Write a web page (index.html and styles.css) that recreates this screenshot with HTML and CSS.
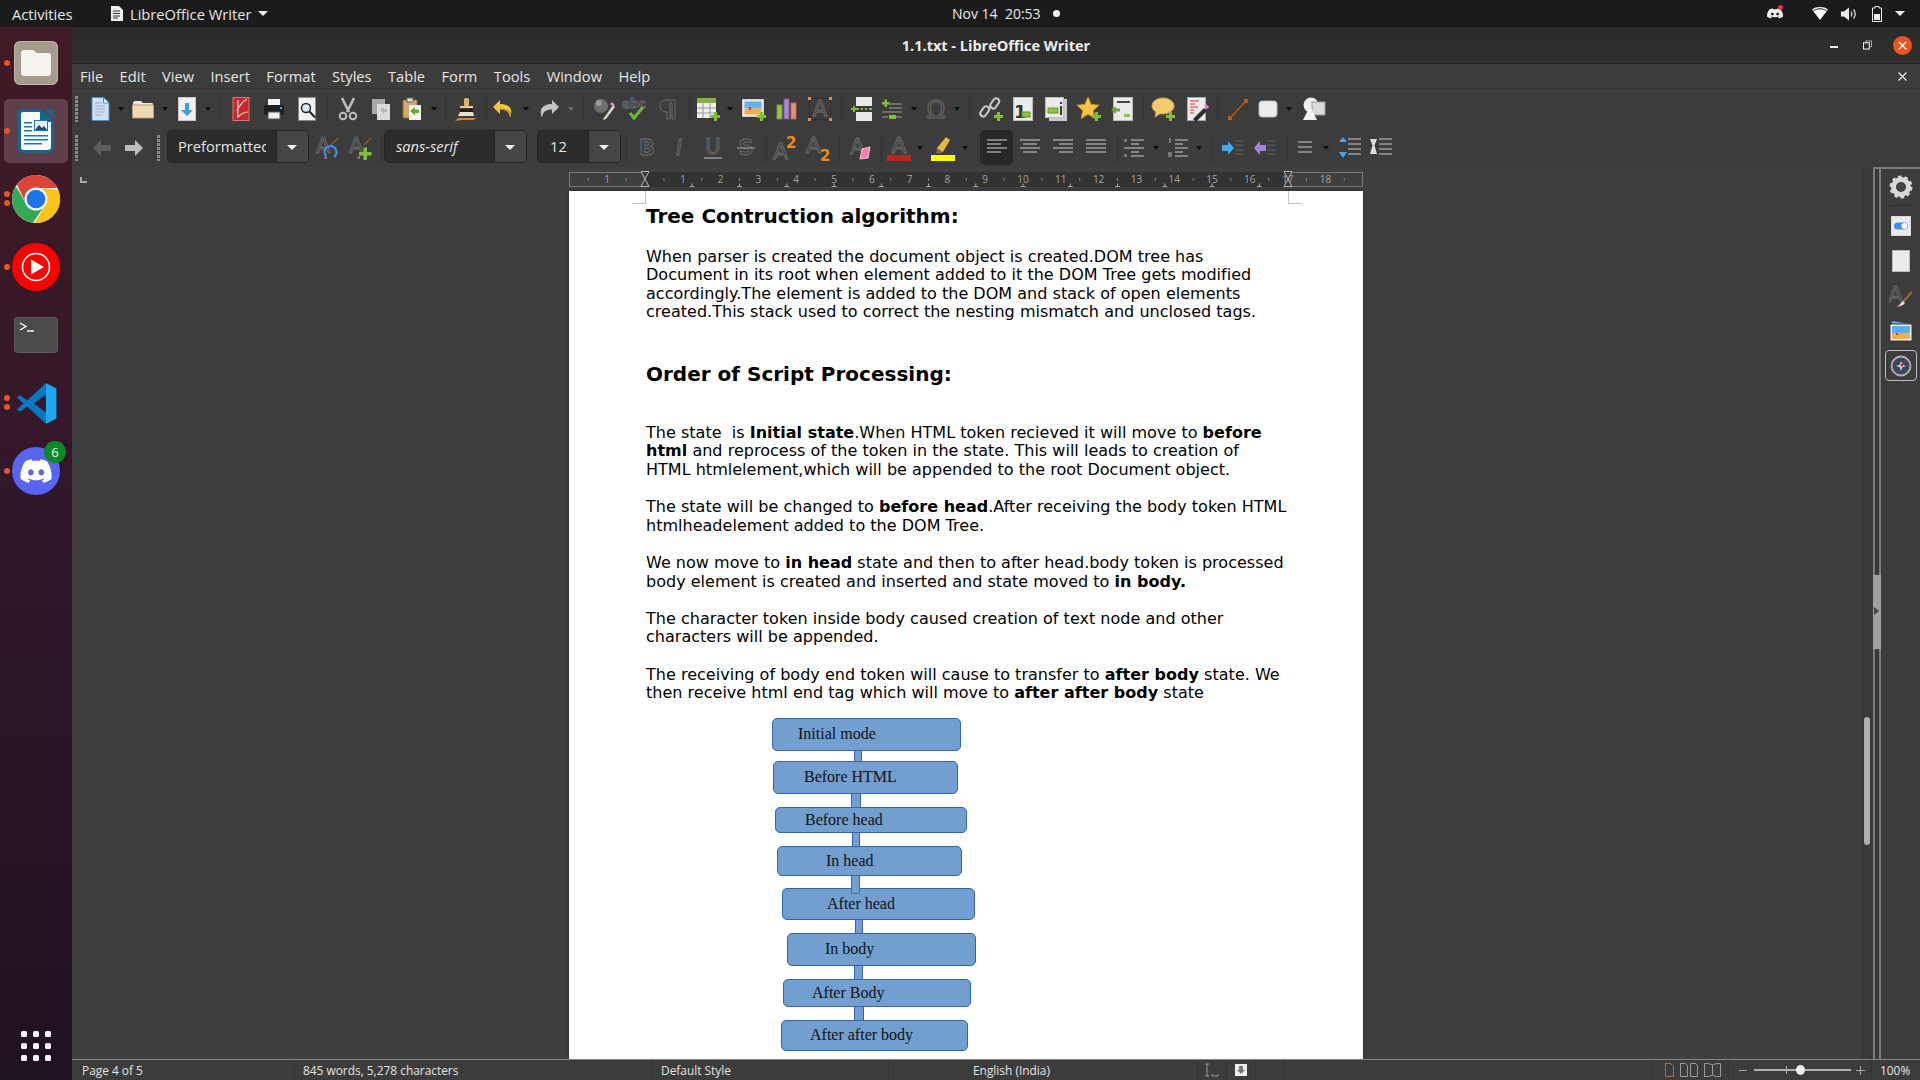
FILE: index.html
```html
<!DOCTYPE html>
<html lang="en">
<head>
<meta charset="utf-8">
<title>1.1.txt - LibreOffice Writer</title>
<link rel="stylesheet" href="styles.css">
</head>
<body>
<header class="topbar">
  <span class="top-left">Activities</span>
  <span class="app-menu">
    <svg width="13" height="15" viewBox="0 0 13 15"><path d="M1 0h8l4 4v11H1z" fill="#eee"/><path d="M3 5h7M3 7.5h7M3 10h7M3 12h5" stroke="#333"/></svg>
    <span>LibreOffice Writer</span><i class="caret"></i>
  </span>
  <span class="clock">Nov 14&nbsp; 20:53</span><i class="clock-dot"></i>
  <span class="tray">
    <span class="tray-discord"><svg width="16" height="13" viewBox="0 0 24 24" preserveAspectRatio="none"><use href="#discord" fill="#eee"/></svg><i class="red-dot"></i></span>
    <svg class="tr-wifi" width="16" height="13" viewBox="0 0 16 13"><path d="M0 2.5C4-.8 12-.8 16 2.5L8 13z" fill="#fff"/><path d="M1.3 3C5-.2 11-.2 14.7 3" stroke="#1b1b1b" stroke-width="1" fill="none" transform="translate(0 1.2)"/></svg>
    <svg class="tr-vol" width="16" height="14" viewBox="0 0 16 14"><path d="M0 4.5h3L8 .5v13l-5-4H0z" fill="#eee"/><path d="M10 4.5c1 1.5 1 3.5 0 5M12.5 2.5c2 2.6 2 6.4 0 9" stroke="#ddd" stroke-width="1.3" fill="none"/></svg>
    <svg class="tr-bat" width="10" height="16" viewBox="0 0 10 16"><path d="M3 .5h4v1.5h2.5v13.5H.5V2H3z" fill="none" stroke="#eee"/><rect x="2" y="8" width="6" height="6" fill="#eee"/></svg>
    <i class="caret tr-caret"></i>
  </span>
</header>

<div class="desktop">
  <nav class="dock">
    <div class="dock-item d-files"><i class="run"></i>
      <svg width="44" height="44" viewBox="0 0 44 44"><rect width="44" height="44" rx="6" fill="#a39c8c"/><rect x=".5" y=".5" width="43" height="43" rx="6" fill="none" stroke="#bdb7a8"/><path d="M7 12q0-3 3-3h9l4 3h11q3 0 3 3v17q0 3-3 3H10q-3 0-3-3z" fill="#f6f3ef"/></svg>
    </div>
    <div class="dock-item d-writer"><i class="run"></i>
      <svg width="38" height="46" viewBox="0 0 38 46"><path d="M5 1h19L37 13v27q0 5-5 5H5q-4 0-4-5V5q0-4 4-4z" fill="#18648f"/><path d="M6 4h17v10h11v25q0 3-3 3H6q-2 0-2-3V6q0-2 2-2z" fill="#f6fafc"/><path d="M27 1h8q2 0 2 2v8z" fill="#18648f"/><path d="M7 14h8v1.600H7zM7 18h8v1.600H7zM7 22h8v1.600H7zM7 27h24v1.600H7zM7 31h24v1.600H7zM7 35h18v1.600H7z" fill="#1c79ad"/><rect x="17.500" y="12.500" width="13" height="10" fill="#e4eef4" stroke="#1c79ad"/><path d="M18 22l4-5 3 3 2-2 3 4z" fill="#26465c"/></svg>
    </div>
    <div class="dock-item d-chrome"><i class="run"></i><i class="run"></i>
      <svg width="48" height="48" viewBox="0 0 48 48"><circle cx="24" cy="24" r="24" fill="#fff"/><g><path d="M24 13h21.3A24 24 0 0 0 4.9 9.5L14.5 29.5A11 11 0 0 1 24 13z" fill="#db4437"/><path d="M24 13h21.3A24 24 0 0 0 4.9 9.5L14.5 29.5A11 11 0 0 1 24 13z" fill="#fcc419" transform="rotate(120 24 24)"/><path d="M24 13h21.3A24 24 0 0 0 4.9 9.5L14.5 29.5A11 11 0 0 1 24 13z" fill="#34a853" transform="rotate(240 24 24)"/></g><circle cx="24" cy="24" r="11.5" fill="#fff"/><circle cx="24" cy="24" r="9.3" fill="#1a73e8"/></svg>
    </div>
    <div class="dock-item d-yt"><i class="run"></i>
      <svg width="48" height="48" viewBox="0 0 48 48"><circle cx="24" cy="24" r="24" fill="#f00"/><circle cx="24" cy="24" r="13.5" fill="none" stroke="#fff" stroke-width="1.6"/><path d="M19 16.5L32 24 19 31.5z" fill="#fff"/></svg>
    </div>
    <div class="dock-item d-term">
      <svg width="44" height="36" viewBox="0 0 44 36"><rect width="44" height="36" rx="4" fill="#4b4b4b"/><rect x=".5" y=".5" width="43" height="35" rx="4" fill="none" stroke="#5e5e5e"/><path d="M6 6l6 3.5L6 13" fill="none" stroke="#fff" stroke-width="1.3"/><path d="M13 14h7" stroke="#fff" stroke-width="1.4"/></svg>
    </div>
    <div class="dock-item d-code"><i class="run"></i><i class="run"></i>
      <svg width="43" height="43" viewBox="0 0 100 100"><path fill-rule="evenodd" d="M72 3L28 43 12 31 4 36 20 50 4 64 12 69 28 57 72 97 96 85V15zM72 29V71L44 50z" fill="#0678c2"/><path d="M72 3L96 15V85L72 97z" fill="#1fa6f1"/></svg>
    </div>
    <div class="dock-item d-discord"><i class="run"></i>
      <svg width="48" height="48" viewBox="0 0 48 48"><circle cx="24" cy="24" r="24" fill="#5865f2"/><use href="#discord" transform="translate(8.5 8.5) scale(1.3)" fill="#fff"/></svg>
      <span class="badge">6</span>
    </div>
    <div class="apps-grid"><i></i><i></i><i></i><i></i><i></i><i></i><i></i><i></i><i></i></div>
  </nav>

  <main class="window">
    <div class="titlebar">
      <span class="title">1.1.txt - LibreOffice Writer</span>
      <span class="win-ctl">
        <i class="w-min"></i>
        <svg class="w-res" width="9" height="10" viewBox="0 0 10 10"><path d="M3 2V.5h6.5V7H8" fill="none" stroke="#bbb"/><rect x=".5" y="2.5" width="6.5" height="7" fill="none" stroke="#eee" stroke-width="1.2"/></svg>
        <span class="w-close"><svg width="19" height="19" viewBox="0 0 19 19"><circle cx="9.5" cy="9.5" r="9.5" fill="#e95420"/><path d="M5.8 5.8l7.4 7.4M13.2 5.8l-7.4 7.4" stroke="#fff" stroke-width="1.4"/></svg></span>
      </span>
    </div>
    <div class="menubar">
      <span>File</span><span>Edit</span><span>View</span><span>Insert</span><span>Format</span><span>Styles</span><span>Table</span><span>Form</span><span>Tools</span><span>Window</span><span>Help</span>
      <svg class="menu-close" width="9" height="9" viewBox="0 0 9 9"><path d="M.5.5l8 8M8.5.5l-8 8" stroke="#eee" stroke-width="1.1"/></svg>
    </div>

    <div class="tb tb1">
      <i class="grip"></i>
      <span class="btn"><svg viewBox="0 0 24 24"><path d="M4 .5h12l5 5v18H4z" fill="#cfe2f6" stroke="#3b90dc"/><path d="M7 6h7M7 9h10M7 12h10M7 15h10M7 18h8" stroke="#9aa9b8"/><path d="M15.5 .5v5.500h5.500z" fill="#fff" stroke="#3b90dc"/></svg></span><i class="dd"></i>
      <span class="btn"><svg viewBox="0 0 24 24"><path d="M2 6q0-2 2-2h6l2 2h9q1 0 1 2H2z" fill="#e7e7e7"/><path d="M1.500 8h21v13H1.500z" fill="#efd9b2" stroke="#b79e72"/></svg></span><i class="dd"></i>
      <span class="btn"><svg viewBox="0 0 24 24"><rect x="3.500" y=".5" width="17" height="23" fill="#f1f1f1" stroke="#c9c9c9"/><path d="M10 6h4v7h4l-6 6-6-6h4z" fill="#3f9ee6"/></svg></span><i class="dd"></i>
      <i class="sep s1"></i>
      <span class="btn"><svg viewBox="0 0 24 24"><rect x="4" y=".5" width="16" height="23" fill="#c5292e" stroke="#d9787a"/><path d="M18 2c-5 3-8 7-10 12M9 3v17c3-3 6-5 10-5" stroke="#f3c6c6" stroke-width="1.2" fill="none"/></svg></span>
      <span class="btn"><svg viewBox="0 0 24 24"><rect x="6" y="2" width="12" height="7" fill="#f2f2f2"/><rect x="2" y="8" width="20" height="10" rx="2" fill="#1d1d1d"/><rect x="18" y="10" width="2" height="2" fill="#33b5e5"/><rect x="6" y="15" width="12" height="7" fill="#eee" stroke="#555"/></svg></span>
      <span class="btn"><svg viewBox="0 0 24 24"><rect x="3.500" y=".5" width="17" height="23" fill="#f1f1f1" stroke="#8a8a8a"/><circle cx="11" cy="11" r="4.500" fill="#dbe4ea" stroke="#222" stroke-width="1.400"/><path d="M14.500 14.500l5.500 6" stroke="#222" stroke-width="2"/></svg></span>
      <i class="sep s2"></i>
      <span class="btn"><svg viewBox="0 0 24 24"><g stroke="#bdbdbd" fill="none"><path d="M6 1l7 14M18 1l-7 14" stroke-width="2.600"/><circle cx="7" cy="19" r="3.300" stroke-width="2"/><circle cx="17" cy="19" r="3.300" stroke-width="2"/></g></svg></span>
      <span class="btn"><svg viewBox="0 0 24 24"><rect x="3" y="2" width="13" height="15" fill="#a9a9a9"/><rect x="8" y="7" width="13" height="16" fill="#dcdcdc"/><path d="M11 13l4-3v2h3v3h-3v2z" fill="#b9b9b9"/></svg></span>
      <span class="btn mn2"><svg viewBox="0 0 24 24"><rect x="3" y="3" width="14" height="18" rx="1" fill="#d5a96a" stroke="#8f6a37"/><rect x="7" y="1" width="6" height="4" fill="#ddd" stroke="#666"/><rect x="9" y="8" width="12" height="15" fill="#f4f4f4"/><path d="M10 14l5-4v2.500h4v3.500h-4v2.500z" fill="#5fae2f"/></svg></span><i class="dd"></i>
      <i class="sep s3"></i>
      <span class="btn"><svg viewBox="0 0 24 24"><rect x="10" y="1" width="5" height="8" rx="1.500" fill="#e0b46c"/><path d="M6 9h13v2H6z" fill="#e9c88f"/><path d="M6 12h13v3H6z" fill="#1d1d1d"/><path d="M6 15h13l1 4H4z" fill="#e9e1cd"/><path d="M1 24l3-3h18l-2 2H8z" fill="#ee7c12"/></svg></span>
      <i class="sep s4"></i>
      <span class="btn"><svg viewBox="0 0 24 24"><path d="M8 3L1 10l7 7v-4.500c6 0 9 2 10 8 3-7 1-13.500-10-13.500z" fill="#f3c545"/><path d="M8 12.500c6 0 9 2 10 8 .6-1.500 1-3 1.200-4.300-1.500-3-5-4.700-11.200-4.700z" fill="#c98f1b"/></svg></span><i class="dd"></i>
      <span class="btn mp1h"><svg viewBox="0 0 24 24"><path d="M15 3l7 7-7 7v-4.500c-6 0-9 2-10 8-3-7-1-13.500 10-13.500z" fill="#c4c4c4"/></svg></span><i class="dd dim"></i>
      <i class="sep s5"></i>
      <span class="btn"><svg viewBox="0 0 24 24"><circle cx="9" cy="9" r="7" fill="#6e6e6e"/><circle cx="7" cy="6" r="3" fill="#9a9a9a"/><path d="M12 21L21 8l2 2L14 22l-3 1z" fill="#d9d9d9"/><path d="M20 5l3 3-2 2-3-3z" fill="#e783c6"/><path d="M13 21l-2 2 1-3z" fill="#f2c04a"/></svg></span>
      <span class="btn mn2"><svg viewBox="0 0 24 24"><text x="-1" y="11" class="ic-txt ic-abc">abc</text><path d="M7 16l4 5L20 10" fill="none" stroke="#69bb2e" stroke-width="3"/></svg></span>
      <span class="btn mp1"><svg viewBox="0 0 24 24"><path d="M15 3H9a6 6 0 0 0 0 12h1v7h3V6h2v16h3V3z" fill="#3d3d3d" stroke="#686868"/></svg></span>
      <i class="sep s6"></i>
      <span class="btn"><svg viewBox="0 0 24 24"><rect x="1" y="1" width="19" height="20" fill="#f0f0f0"/><rect x="1" y="1" width="19" height="5" fill="#7fb534"/><path d="M1 11h19M1 16h19M7 1v20M14 1v20" stroke="#999"/><path d="M15 18h3v-3h3v3h3v3h-3v3h-3v-3h-3z" fill="#7cc13a"/></svg></span><i class="dd"></i>
      <span class="btn mp2h"><svg viewBox="0 0 24 24"><rect x=".5" y="2.500" width="21" height="17" fill="#eaeaea" stroke="#cfcfcf"/><rect x="2.500" y="4.500" width="17" height="7" fill="#5cb5ee"/><path d="M2.500 11.500h17v6h-17z" fill="#f0b04c"/><path d="M7 10h2v3H7z" fill="#d33"/><path d="M15 18h3v-3h3v3h3v3h-3v3h-3v-3h-3z" fill="#7cc13a"/></svg></span>
      <span class="btn"><svg viewBox="0 0 24 24"><rect x="2" y="8" width="5" height="14" fill="#93c94f" stroke="#6a9c2f"/><rect x="9" y="2" width="5" height="20" fill="#ae86d4" stroke="#7f5aa8"/><rect x="16" y="6" width="5" height="16" fill="#e2927c" stroke="#b96c56"/></svg></span>
      <span class="btn"><svg viewBox="0 0 24 24"><rect x="1.500" y="1.500" width="21" height="21" fill="none" stroke="#242424" stroke-dasharray="2 2"/><text x="12" y="19" class="ic-txt ic-a" text-anchor="middle">A</text><path d="M0 0h3v3H0zM21 0h3v3h-3zM0 21h3v3H0zM21 21h3v3h-3z" fill="#e88a4a"/></svg></span>
      <i class="sep s7"></i>
      <span class="btn"><svg viewBox="0 0 24 24"><rect x="7" y="0" width="16" height="9" fill="#e9e9e9"/><rect x="7" y="15" width="16" height="9" fill="#e9e9e9"/><path d="M7 12h3M12 12h2M16 12h2M20 12h3" stroke="#7cc13a" stroke-width="2"/><path d="M2 11h2V9h2v2h2v2H6v2H4v-2H2z" fill="#7cc13a"/></svg></span>
      <span class="btn mn2"><svg viewBox="0 0 24 24"><path d="M9 7h13M9 11h13M2 15h20M2 20h6M16 20h6" stroke="#9d9d9d"/><path d="M2 5h2.500V2.500H7V5h2.500v2.500H7V10H4.500V7.500H2z" fill="#7cc13a"/><rect x="9" y="18" width="7" height="4" fill="#7cc13a"/></svg></span><i class="dd"></i>
      <span class="btn"><svg viewBox="0 0 24 24"><text x="12" y="21" class="ic-txt ic-o" text-anchor="middle">Ω</text></svg></span><i class="dd"></i>
      <i class="sep s8"></i>
      <span class="btn"><svg viewBox="0 0 24 24"><g fill="none" stroke="#c9c9c9" stroke-width="2"><rect x="13" y="1" width="6" height="11" rx="3" transform="rotate(35 16 6)"/><rect x="3" y="9" width="6" height="11" rx="3" transform="rotate(35 6 14)"/></g><path d="M15 18h3v-3h3v3h3v3h-3v3h-3v-3h-3z" fill="#7cc13a"/></svg></span>
      <span class="btn mn1"><svg viewBox="0 0 24 24"><rect x="2.500" y=".5" width="19" height="23" fill="#ebebeb" stroke="#bbb"/><text x="3" y="21" class="ic-txt ic-n">1</text><rect x="11" y="15" width="8" height="5" fill="#8ec63f" stroke="#5e9424"/></svg></span>
      <span class="btn"><svg viewBox="0 0 24 24"><rect x="5" y="2" width="18" height="22" fill="#c9c9c9"/><rect x="1.500" y=".5" width="18" height="20" fill="#ebebeb" stroke="#bbb"/><rect x="4" y="11" width="10" height="5" fill="#8ec63f" stroke="#5e9424"/><path d="M16 5h2v2h-2zM16 9h2v9h-2z" fill="#333"/></svg></span>
      <span class="btn"><svg viewBox="0 0 24 24"><path d="M11 0l3.200 7.500 8 .7-6 5.300 1.800 8L11 17.300 4 21.500l1.800-8-6-5.300 8-.7z" fill="#f6c344" stroke="#c4931d"/><path d="M15 18h3v-3h3v3h3v3h-3v3h-3v-3h-3z" fill="#7cc13a"/></svg></span>
      <span class="btn"><svg viewBox="0 0 24 24"><rect x="3.500" y=".5" width="19" height="23" fill="#ebebeb" stroke="#bbb"/><path d="M7 5h13" stroke="#444" stroke-width="2"/><path d="M1 13l5-4v2.500h4v3H6V17z" fill="#5fae2f"/><rect x="14" y="17" width="6" height="3" fill="#8ec63f"/></svg></span>
      <i class="sep s9"></i>
      <span class="btn"><svg viewBox="0 0 24 24"><path d="M12 1c6 0 11 3.500 11 8s-5 8-11 8c-1 0-2 0-3-.3L4 20l1-5C2.500 13.500 1 11.500 1 9c0-4.500 5-8 11-8z" fill="#f6cb6e" stroke="#cda045"/><path d="M15 18h3v-3h3v3h3v3h-3v3h-3v-3h-3z" fill="#7cc13a"/></svg></span>
      <span class="btn mp1"><svg viewBox="0 0 24 24"><rect x="2.500" y=".5" width="18" height="23" fill="#ececec" stroke="#aaa"/><path d="M5 4h9M5 7h5M5 10h8M5 13h4M5 16h4" stroke="#d33" stroke-width="1.200"/><path d="M8 22l11-11 3 3-11 11z" fill="#2d2d2d"/><path d="M19 9l2-2 3 3-2 2z" fill="#e67fc4"/></svg></span>
      <i class="sep s10"></i>
      <span class="btn"><svg viewBox="0 0 24 24"><path d="M4 21L20 4" stroke="#c5570f" stroke-width="1.300"/><rect x="2" y="19" width="4" height="4" fill="#c5570f"/><rect x="18" y="2" width="4" height="4" fill="#c5570f"/></svg></span>
      <span class="btn mn3"><svg viewBox="0 0 24 24"><rect x="3" y="4" width="18" height="16" rx="3" fill="#ececec" stroke="#bbb"/></svg></span><i class="dd"></i>
      <span class="btn mp2h"><svg viewBox="0 0 24 24"><circle cx="9" cy="8" r="7.500" fill="#efefef"/><rect x="10" y="5" width="13" height="13" fill="#dcdcdc" stroke="#999"/><path d="M8 9l7 14H1z" fill="#f3f3f3"/></svg></span>
    </div>

    <div class="tb tb2">
      <i class="grip"></i>
      <span class="btn"><svg viewBox="0 0 24 24"><path d="M11 4L3 12l8 8v-5h10V9H11z" fill="#5e5e5e"/></svg></span>
      <span class="btn mn1"><svg viewBox="0 0 24 24"><path d="M13 4l8 8-8 8v-5H3V9h10z" fill="#bdbdbd"/></svg></span>
      <i class="grip g2"></i>
      <span class="combo c-style"><span class="combo-text">Preformatted Text</span><i class="combo-drop"></i></span>
      <span class="btn mp2"><svg viewBox="0 0 24 24"><text x="0" y="17" class="ic-txt ic-a">A</text><path d="M10 20a6 6 0 1 1 8 1" fill="none" stroke="#3a8fe0" stroke-width="2.400"/><path d="M15 9l7-7" stroke="#8a5a2a" stroke-width="1.400"/><path d="M7 22l4-2v3z" fill="#d45ab0"/></svg></span>
      <span class="btn"><svg viewBox="0 0 24 24"><text x="0" y="17" class="ic-txt ic-a">A</text><path d="M15 9l7-7" stroke="#8a5a2a" stroke-width="1.400"/><path d="M7 22l4-2v3z" fill="#d45ab0"/><path d="M10 16h4.500v-4.500h3.500V16h4.500v3.500H18V24h-3.500v-4.500H10z" fill="#7cc13a"/></svg></span>
      <i class="sep t1"></i>
      <span class="combo c-font"><span class="combo-text it">sans-serif</span><i class="combo-drop"></i></span>
      <span class="combo c-size"><span class="combo-text">12</span><i class="combo-drop"></i></span>
      <i class="sep t2"></i>
      <span class="btn"><svg viewBox="0 0 24 24"><text x="12" y="19" class="ic-txt ic-b" text-anchor="middle">B</text></svg></span>
      <span class="btn mn1h"><svg viewBox="0 0 24 24"><text x="12" y="19" class="ic-txt ic-i" text-anchor="middle">I</text></svg></span>
      <span class="btn mp1"><svg viewBox="0 0 24 24"><text x="12" y="18" class="ic-txt ic-u" text-anchor="middle">U</text><path d="M3 22h18" stroke="#a0a0a0" stroke-width="1.400"/></svg></span>
      <span class="btn"><svg viewBox="0 0 24 24"><text x="12" y="19" class="ic-txt ic-b" text-anchor="middle">S</text><path d="M3 12h18" stroke="#8b8b8b" stroke-width="1.400"/></svg></span>
      <i class="sep t3"></i>
      <span class="btn"><svg viewBox="0 0 24 24"><text x="0" y="23" class="ic-txt ic-a2">A</text><text x="13" y="12" class="ic-or">2</text></svg></span>
      <span class="btn mp1"><svg viewBox="0 0 24 24"><text x="-1" y="17" class="ic-txt ic-a2">A</text><text x="13" y="25" class="ic-or">2</text></svg></span>
      <i class="sep t4"></i>
      <span class="btn"><svg viewBox="0 0 24 24"><text x="1" y="18" class="ic-txt ic-a2">A</text><path d="M11 23l2-10 8-2-2 11z" fill="#f27fb0" stroke="#ffc0d8"/></svg></span>
      <i class="sep t5"></i>
      <span class="btn"><svg viewBox="0 0 24 24"><text x="12" y="17" class="ic-txt ic-a2" text-anchor="middle">A</text><rect y="19" width="24" height="6" fill="#c41f1f"/></svg></span><i class="dd"></i>
      <span class="btn mp1"><svg viewBox="0 0 24 24"><path d="M6 12L15 1l4 3-7 12-4 1z" fill="#e2b93e"/><path d="M6 12l6 4-4 2-3-1z" fill="#7d6a3a"/><rect y="19" width="24" height="6" fill="#ffff00"/></svg></span><i class="dd"></i>
      <i class="sep t6"></i>
      <span class="btn on"><svg viewBox="0 0 24 24"><path d="M2 4h20M2 8h14M2 12h20M2 16h14" stroke="#9d9d9d" stroke-width="1.500"/></svg></span>
      <span class="btn"><svg viewBox="0 0 24 24"><path d="M2 4h20M5 8h14M2 12h20M5 16h14" stroke="#9d9d9d" stroke-width="1.500"/></svg></span>
      <span class="btn"><svg viewBox="0 0 24 24"><path d="M2 4h20M8 8h14M2 12h20M8 16h14" stroke="#9d9d9d" stroke-width="1.500"/></svg></span>
      <span class="btn"><svg viewBox="0 0 24 24"><path d="M2 4h20M2 8h20M2 12h20M2 16h20" stroke="#9d9d9d" stroke-width="1.500"/></svg></span>
      <i class="sep t7"></i>
      <span class="btn"><svg viewBox="0 0 24 24"><path d="M9 4h13M9 8h8M2 12h20M9 16h8M9 20h13" stroke="#9d9d9d" stroke-width="1.300"/><path d="M2 3h3v3H2zM2 18h3v3H2z" fill="#767676"/></svg></span><i class="dd"></i>
      <span class="btn"><svg viewBox="0 0 24 24"><path d="M9 4h13M9 8h8M9 12h13M9 16h8M9 20h13" stroke="#9d9d9d" stroke-width="1.300"/><path d="M3 2h2v5H3zM2 16h4v5H2z" fill="#767676"/></svg></span><i class="dd"></i>
      <i class="sep t8"></i>
      <span class="btn"><svg viewBox="0 0 24 24"><path d="M14 5h8M14 9h8M14 14h8M14 18h8" stroke="#545454" stroke-width="1.400"/><path d="M1 9h6V5l6 7-6 7v-4H1z" fill="#45a6ea"/></svg></span>
      <span class="btn mn1"><svg viewBox="0 0 24 24"><path d="M14 5h8M14 9h8M14 14h8M14 18h8" stroke="#545454" stroke-width="1.400"/><path d="M13 9H7V5l-6 7 6 7v-4h6z" fill="#a583dd"/></svg></span>
      <i class="sep t9"></i>
      <span class="btn"><svg viewBox="0 0 24 24"><path d="M5 6h14M5 11h14M5 16h14" stroke="#9d9d9d" stroke-width="1.500"/></svg></span><i class="dd"></i>
      <span class="btn mp1h"><svg viewBox="0 0 24 24"><path d="M10 3h13M10 8h13M10 13h13M10 18h13M1 22" stroke="#9d9d9d" stroke-width="1.400"/><path d="M5 1l4 5H1zM5 22l4-6H1z" fill="#45a6ea"/></svg></span>
      <span class="btn mn1h"><svg viewBox="0 0 24 24"><path d="M10 3h13M10 8h13M10 13h13M10 18h13" stroke="#9d9d9d" stroke-width="1.400"/><path d="M1 3h7l-2.500 6.500L8 18H1l2.500-8.500z" fill="#ddd"/></svg></span>
    </div>

    <div class="workspace">
      <section class="doc">
        <div class="corner"></div>
        <svg class="ruler" width="794" height="20" viewBox="0 0 794 20">
          <rect x=".5" y="2.500" width="75" height="14" class="r-margin"/>
          <rect x="719.500" y="2.500" width="74" height="14" class="r-margin"/>
          <rect x="76" y="2" width="643" height="15" class="r-body"/>
          <path class="r-tick" d="M19.300 8v3M57 8v3M94.900 8v3M132.700 8v3M170.500 8v3M208.300 8v3M246.100 8v3M283.900 8v3M321.700 8v3M359.500 8v3M397.300 8v3M435.100 8v3M472.900 8v3M510.700 8v3M548.500 8v3M586.300 8v3M624.100 8v3M661.900 8v3M699.700 8v3M737.500 8v3M775.300 8v3"/>
          <path class="r-tab" d="M123 13.500v3m-2.500 0h5M170.500 13.500v3m-2.500 0h5M217.800 13.500v3m-2.500 0h5M265 13.500v3m-2.500 0h5M312.300 13.500v3m-2.500 0h5M359.500 13.500v3m-2.500 0h5M406.800 13.500v3m-2.500 0h5M454 13.500v3m-2.500 0h5M501.300 13.500v3m-2.500 0h5M548.500 13.500v3m-2.500 0h5M595.800 13.500v3m-2.500 0h5M643 13.500v3m-2.500 0h5M690.300 13.500v3m-2.500 0h5"/>
          <g class="r-num" text-anchor="middle">
            <text x="38.200" y="13">1</text><text x="113.800" y="13">1</text><text x="151.600" y="13">2</text><text x="189.400" y="13">3</text><text x="227.200" y="13">4</text><text x="265" y="13">5</text><text x="302.800" y="13">6</text><text x="340.600" y="13">7</text><text x="378.400" y="13">8</text><text x="416.200" y="13">9</text><text x="454" y="13">10</text><text x="491.800" y="13">11</text><text x="529.600" y="13">12</text><text x="567.400" y="13">13</text><text x="605.200" y="13">14</text><text x="643" y="13">15</text><text x="680.800" y="13">16</text><text x="718.600" y="13">17</text><text x="756.400" y="13">18</text>
          </g>
          <path class="r-mark" d="M72 1.500h8l-4 7.500 4 7.500h-8l4-7.500zM715 1.500h8l-4 7.500 4 7.500h-8l4-7.500z"/>
        </svg>
        <article class="page">
          <i class="crop crop-l"></i><i class="crop crop-r"></i>
          <h2 class="h-first">Tree Contruction algorithm:</h2>
          <p>When parser is created the document object is created.DOM tree has
Document in its root when element added to it the DOM Tree gets modified
accordingly.The element is added to the DOM and stack of open elements
created.This stack used to correct the nesting mismatch and unclosed tags.</p>
          <h2 class="h-second">Order of Script Processing:</h2>
          <p>The state  is <b>Initial state</b>.When HTML token recieved it will move to <b>before
html</b> and reprocess of the token in the state. This will leads to creation of
HTML htmlelement,which will be appended to the root Document object.</p>
          <p>The state will be changed to <b>before head</b>.After receiving the body token HTML
htmlheadelement added to the DOM Tree.</p>
          <p>We now move to <b>in head</b> state and then to after head.body token is processed
body element is created and inserted and state moved to <b>in body.</b></p>
          <p>The character token inside body caused creation of text node and other
characters will be appended.</p>
          <p class="p-last">The receiving of body end token will cause to transfer to <b>after body</b> state. We
then receive html end tag which will move to <b>after after body</b> state</p>
          <div class="diagram">
            <i class="link l1"></i><i class="link l2"></i><i class="link l3"></i><i class="link l4"></i><i class="link l5"></i><i class="link l6"></i><i class="link l7"></i>
            <div class="node n1">Initial mode</div>
            <div class="node n2">Before HTML</div>
            <div class="node n3">Before head</div>
            <div class="node n4">In head</div>
            <div class="node n5">After head</div>
            <div class="node n6">In body</div>
            <div class="node n7">After Body</div>
            <div class="node n8">After after body</div>
          </div>
        </article>
      </section>
      <div class="vscroll"><i class="thumb"></i></div>
      <div class="side-split"><i class="side-handle"></i></div>
      <aside class="deck">
        <span class="dk"><svg width="24" height="24" viewBox="0 0 24 24"><circle cx="12" cy="12" r="7.500" fill="none" stroke="#d8d8d8" stroke-width="5"/><circle cx="12" cy="12" r="10" fill="none" stroke="#d8d8d8" stroke-width="3" stroke-dasharray="3.500 2.780"/><circle cx="12" cy="12" r="3.500" fill="#444"/></svg></span>
        <i class="dk-sep"></i>
        <span class="dk"><svg width="20" height="20" viewBox="0 0 20 20"><rect width="20" height="20" fill="#ebebeb" stroke="#ccc"/><rect x="3" y="6.500" width="14" height="7" rx="3.500" fill="#3d8ef0"/><circle cx="13.500" cy="10" r="3" fill="#fff"/></svg></span>
        <span class="dk"><svg width="18" height="22" viewBox="0 0 18 22"><rect x=".5" y=".5" width="17" height="21" fill="#ebebeb" stroke="#bbb"/></svg></span>
        <span class="dk"><svg width="24" height="24" viewBox="0 0 24 24"><text x="-1" y="18" class="ic-txt ic-a3">A</text><path d="M13 19L23 8" stroke="#a8621e" stroke-width="2"/><path d="M11 20l3-3 2 2-2 2-5 2z" fill="#e0e0e0"/><path d="M8 23l3-1-1-2z" fill="#d55ab4"/></svg></span>
        <span class="dk"><svg width="24" height="22" viewBox="0 0 24 22"><path d="M3 1l18 3-1 3H3z" fill="#5fb6f0"/><rect x="1" y="4" width="22" height="17" fill="#f4f4f4" stroke="#333"/><rect x="3" y="6" width="18" height="7" fill="#56b2ef"/><rect x="3" y="13" width="18" height="6" fill="#efb24b"/><rect x="7" y="13" width="2" height="2" fill="#d33"/></svg></span>
        <span class="dk dk-on"><svg width="22" height="22" viewBox="0 0 22 22"><circle cx="11" cy="11" r="9.500" fill="#3b4660" stroke="#b5b5b5" stroke-width="1.800"/><path d="M11 6l1.300 3.700L16 11l-3.700 1.300L11 16l-1.300-3.700L6 11l3.700-1.300z" fill="#d8d8d8"/><path d="M16 6l-6 4 2 2z" fill="#c92a2a"/></svg></span>
      </aside>
    </div>

    <footer class="status">
      <span class="st st-page">Page 4 of 5</span>
      <span class="st st-words">845 words, 5,278 characters</span>
      <span class="st st-style">Default Style</span>
      <span class="st st-lang">English (India)</span>
      <span class="st st-ic"><svg width="16" height="16" viewBox="0 0 16 16"><path d="M1 2h4M3 2v12M1 14h4M8 14h6M8 12v2M14 12v2" fill="none" stroke="#9a9a9a"/></svg></span>
      <span class="st st-ic"><svg width="12" height="12" viewBox="0 0 12 12"><rect width="12" height="12" fill="#f0f0f0"/><path d="M4 2h4v4h2L6 10 2 6h2z" fill="#777"/></svg></span>
      <span class="st st-ic"></span>
      <span class="st st-grow"></span>
      <span class="st st-lay">
        <svg width="9" height="14" viewBox="0 0 9 14"><path d="M.5.5h5l3 3v10h-8z" fill="none" stroke="#e0660a"/></svg>
        <svg width="18" height="14" viewBox="0 0 18 14"><path d="M.5.5h5l2 2v11h-7zM10.500.5h5l2 2v11h-7z" fill="none" stroke="#999"/></svg>
        <svg width="17" height="14" viewBox="0 0 17 14"><path d="M8.500 2Q6 .5 3 .5H.5v13H3q3 0 5.500-1.500Q11 13.500 14 13.500h2.500V.5H14Q11 .5 8.500 2zv10" fill="none" stroke="#999"/></svg>
      </span>
      <span class="st st-zoom">
        <i class="z-minus"></i>
        <span class="z-track"><i class="z-tick"></i><i class="z-thumb"></i></span>
        <i class="z-plus"></i>
      </span>
      <span class="st st-pct">100%</span>
    </footer>
  </main>
</div>

<svg class="defs" width="0" height="0" aria-hidden="true"><defs><path id="discord" d="M20.317 4.37a19.791 19.791 0 0 0-4.885-1.515.074.074 0 0 0-.079.037c-.21.375-.444.864-.608 1.25a18.27 18.27 0 0 0-5.487 0 12.64 12.64 0 0 0-.617-1.25.077.077 0 0 0-.079-.037A19.736 19.736 0 0 0 3.677 4.37a.07.07 0 0 0-.032.027C.533 9.046-.32 13.58.099 18.057a.082.082 0 0 0 .031.057 19.9 19.9 0 0 0 5.993 3.03.078.078 0 0 0 .084-.028 14.09 14.09 0 0 0 1.226-1.994.076.076 0 0 0-.041-.106 13.107 13.107 0 0 1-1.872-.892.077.077 0 0 1-.008-.128 10.2 10.2 0 0 0 .372-.292.074.074 0 0 1 .077-.01c3.928 1.793 8.18 1.793 12.062 0a.074.074 0 0 1 .078.01c.12.098.246.198.373.292a.077.077 0 0 1-.006.127 12.299 12.299 0 0 1-1.873.892.077.077 0 0 0-.041.107c.36.698.772 1.362 1.225 1.993a.076.076 0 0 0 .084.028 19.839 19.839 0 0 0 6.002-3.03.077.077 0 0 0 .032-.054c.5-5.177-.838-9.674-3.549-13.66a.061.061 0 0 0-.031-.03zM8.02 15.33c-1.183 0-2.157-1.085-2.157-2.419 0-1.333.956-2.419 2.157-2.419 1.21 0 2.176 1.096 2.157 2.42 0 1.333-.956 2.418-2.157 2.418zm7.975 0c-1.183 0-2.157-1.085-2.157-2.419 0-1.333.955-2.419 2.157-2.419 1.21 0 2.176 1.096 2.157 2.42 0 1.333-.946 2.418-2.157 2.418z"/></defs></svg>
</body>
</html>
```
FILE: styles.css
```css
* { box-sizing: border-box; }
html, body { margin: 0; height: 100%; }
body {
  width: 1920px; height: 1080px; overflow: hidden;
  display: flex; flex-direction: column;
  background: #3c3c3c; color: #eee;
  font-family: "Open Sans", "Noto Sans", sans-serif;
}
i { font-style: normal; display: block; }
.defs { position: absolute; }

/* top bar */
.topbar { height: 27px; flex: none; background: #1b1b1b; display: flex; align-items: center; font-size: 14.7px; color: #e8e8e8; }
.top-left { margin-left: 12px; width: 98px; }
.app-menu { display: flex; align-items: center; gap: 7px; width: 842px; }
.caret { width: 0; height: 0; border-left: 5px solid transparent; border-right: 5px solid transparent; border-top: 5px solid #eee; }
.clock { width: 101px; font-size: 14px; }
.clock-dot { width: 7px; height: 7px; border-radius: 50%; background: #f2f2f2; }
.tray { margin-left: auto; display: flex; align-items: center; padding-right: 15px; }
.tray-discord { position: relative; display: flex; }
.red-dot { position: absolute; right: 0; top: -2px; width: 5px; height: 5px; background: #e33; border-radius: 50%; }
.tr-wifi { margin-left: 29px; }
.tr-vol { margin-left: 13px; }
.tr-bat { margin-left: 15px; }
.tr-caret { margin-left: 13px; }

.desktop { flex: 1; display: flex; min-height: 0; }

/* dock */
.dock { width: 72px; flex: none; background: linear-gradient(180deg, #401a24 0%, #32172a 45%, #1f1220 100%); display: flex; flex-direction: column; align-items: center; position: relative; }
.dock-item { position: absolute; display: flex; left: 0; width: 72px; justify-content: center; align-items: center; }
.dock-item .run { position: absolute; left: 4px; width: 6px; height: 6px; border-radius: 50%; background: #e95420; }
.d-files { top: 14px; height: 44px; }
.d-writer { top: 72px; height: 64px; }
.d-writer::before { content: ""; position: absolute; left: 4px; top: 0; width: 64px; height: 64px; background: rgba(255,255,255,.17); border-radius: 5px; }
.d-writer svg { position: relative; }
.d-chrome { top: 148px; height: 48px; }
.d-chrome .run:nth-child(1) { top: 16px; }
.d-chrome .run:nth-child(2) { top: 25px; }
.d-yt { top: 216px; height: 48px; }
.d-term { top: 290px; height: 36px; }
.d-code { top: 355px; height: 43px; }
.d-code .run:nth-child(1) { top: 13px; }
.d-code .run:nth-child(2) { top: 22px; }
.d-discord { top: 420px; height: 48px; }
.badge { position: absolute; left: 44px; top: -6px; width: 22px; height: 22px; border-radius: 50%; background: #0e8a24; color: #eee; font-size: 13px; text-align: center; line-height: 22px; }
.apps-grid { margin-top: auto; margin-bottom: 19px; display: grid; grid-template-columns: repeat(3, 6px); grid-auto-rows: 6px; gap: 6px; }
.apps-grid i { background: #f4f4f4; border-radius: 1.5px; }

/* window */
.window { flex: 1; min-width: 0; display: flex; flex-direction: column; background: #3c3c3c; }
.titlebar { height: 37px; flex: none; background: linear-gradient(#2b2b2b, #2f2f2f); display: flex; align-items: center; justify-content: center; position: relative; border-bottom: 1px solid #232323; }
.title { font-size: 14.5px; font-weight: 700; color: #eee; }
.win-ctl { position: absolute; right: 8px; top: 0; bottom: 0; display: flex; align-items: center; }
.w-min { width: 8px; height: 2px; background: #eee; margin-top: 4px; margin-right: 25px; }
.w-res { margin-right: 21px; }
.w-close { display: flex; }

.menubar { height: 25px; flex: none; display: flex; align-items: center; font-size: 14.67px; color: #e6e6e6; position: relative; background: #3c3c3c; border-bottom: 1px solid #343434; }
.menubar span { margin-left: 8px; margin-right: 8.4px; }
.menu-close { position: absolute; right: 13.500px; top: 8px; }

/* toolbars */
.tb { height: 39px; flex: none; display: flex; align-items: center; }
.grip { width: 3px; height: 26px; margin-left: 3px; margin-right: 5px; background: repeating-linear-gradient(#8b8b8b 0 3px, transparent 3px 4px); flex: none; }
.tb2 .grip { margin-right: 7px; }
.tb2 .g2 { margin-left: 7px; margin-right: 7px; }
.btn { width: 33px; height: 33px; flex: none; display: flex; align-items: center; justify-content: center; border-radius: 5px; }
.btn svg { width: 24px; height: 24px; display: block; overflow: visible; }
.btn.on { background: #272727; height: 35px; }
.mn3 { margin-left: -3px; }
.mn2 { margin-left: -2px; }
.mn1h { margin-left: -1.5px; }
.mn1 { margin-left: -1px; }
.mp1 { margin-left: 1px; }
.mp1h { margin-left: 1.5px; }
.mp2 { margin-left: 2px; }
.mp2h { margin-left: 2.5px; }
.dd { width: 10.5px; height: 33px; flex: none; position: relative; }
.dd::after { content: ""; position: absolute; left: 2px; top: 15px; border-left: 3.500px solid transparent; border-right: 3.500px solid transparent; border-top: 4px solid #0d0d0d; }
.dd.dim::after { border-top-color: #666; }
.sep { width: 1px; height: 28px; background: #333; flex: none; }
.s1 { margin: 0 4px 0 6px; }
.s2 { margin: 0 4px 0 3px; }
.s3 { margin: 0 3px 0 6px; }
.s4 { margin: 0 .5px 0 4px; }
.s5 { margin: 0 3.5px 0 7px; }
.s6 { margin: 0 1.5px 0 3.5px; }
.s7 { margin: 0 2.5px 0 4.5px; }
.s8 { margin: 0 4.5px 0 6px; }
.s9 { margin: 0 2.5px 0 4.5px; }
.s10 { margin: 0 3.5px 0 3.5px; }
.t1 { margin: 0 2px 0 4px; }
.t2 { margin: 0 3.5px 0 5px; }
.t3 { margin: 0 1.5px 0 4px; }
.t4 { margin: 0 4.5px 0 3.5px; }
.t5 { margin: 0 0 0 3.5px; }
.t6 { margin: 0 2px 0 7px; }
.t7 { margin: 0 0 0 4.5px; }
.t8 { margin: 0 4px 0 7px; }
.t9 { margin: 0 .5px 0 5px; }

.ic-txt { font-family: "DejaVu Sans", sans-serif; fill: #414141; stroke: #6e6e6e; stroke-width: .8px; }
.ic-abc { font-size: 12px; font-weight: 700; }
.ic-a { font-size: 21px; }
.ic-a2 { font-size: 22px; }
.ic-a3 { font-size: 22px; }
.ic-o { font-size: 24px; }
.ic-n { font-size: 18px; font-weight: 700; fill: #333; stroke: none; }
.ic-b { font-size: 21px; font-weight: 700; }
.ic-i { font-size: 21px; font-style: italic; }
.ic-u { font-size: 21px; }
.ic-or { font-family: "DejaVu Sans", sans-serif; font-size: 15px; font-weight: 700; fill: #f08a14; }

.combo { height: 33px; flex: none; display: flex; margin-bottom: 2px; background: #2c2c2c; border: 1px solid #242424; border-radius: 5px; overflow: hidden; font-size: 14.67px; color: #e4e4e4; }
.combo-text { flex: 1; min-width: 0; overflow: hidden; white-space: nowrap; line-height: 31px; padding-left: 10px; }
.combo-text.it { font-style: italic; padding-left: 11px; }
.combo-drop { width: 32px; flex: none; background: #454545; border-left: 1px solid #242424; position: relative; }
.combo-drop::after { content: ""; position: absolute; left: 10px; top: 14px; border-left: 5px solid transparent; border-right: 5px solid transparent; border-top: 5px solid #eee; }
.c-style { width: 142px; }
.c-style .combo-text { margin-right: 10px; }
.c-font { width: 143px; margin-right: 10px; }
.c-size { width: 84px; }
.c-size .combo-text { padding-left: 12px; }

/* workspace */
.workspace { flex: 1; min-height: 0; display: flex; }
.doc { flex: 1; min-width: 0; background: #3f3f3f; display: flex; flex-direction: column; align-items: center; position: relative; overflow: hidden; }
.corner { position: absolute; left: 8px; top: 10px; width: 7px; height: 6px; border-left: 2px solid #aaa; border-bottom: 2px solid #aaa; }
.ruler { display: block; flex: none; margin: 3px 1px 1px 0; }
.r-margin { fill: #3f3f3f; stroke: #777; }
.r-body { fill: #323232; }
.r-tick { stroke: #7c7c7c; }
.r-tab { stroke: #a9a9a9; fill: none; }
.r-num { font-family: "Open Sans", sans-serif; font-size: 10px; fill: #a2a2a2; }
.r-mark { fill: #3a3a3a; stroke: #b4b4b4; }

.page { width: 794px; flex: 1; margin-right: 1px; background: #fff; position: relative; overflow: hidden; padding: 13px 0 0 77px; box-shadow: 0 0 3px #262626; font-family: "DejaVu Sans", sans-serif; color: #000; }
.crop { position: absolute; top: 0; width: 14px; height: 13px; border-bottom: 1px solid #c4c4c4; }
.crop-l { left: 63px; border-right: 1px solid #c4c4c4; }
.crop-r { left: 719px; border-left: 1px solid #c4c4c4; }
.page h2 { margin: 0; font-size: 20px; font-weight: 700; line-height: 25px; white-space: pre; }
.page p { margin: 0 0 18.600px; font-size: 16px; line-height: 18.600px; white-space: pre; letter-spacing: .02px; }
.page .h-first { margin-bottom: 18.5px; }
.page .h-second { margin-top: 40.5px; margin-bottom: 36.5px; }
.page .p-last { margin-bottom: 0; }

.diagram { position: relative; width: 794px; height: 356px; margin: 1px 0 0 -77px; font-family: "Liberation Serif", serif; font-size: 16px; color: #111; }
.node { position: absolute; background: #729fcf; border: 1px solid #3465a4; border-radius: 5px; display: flex; align-items: center; white-space: nowrap; }
.link { position: absolute; background: #729fcf; border: 1px solid #3465a4; border-width: 0 1px; }
.n1 { left: 203px; top: 14px; width: 189px; height: 33px; padding-left: 25px; }
.n2 { left: 204px; top: 57px; width: 185px; height: 33px; padding-left: 30px; }
.n3 { left: 206px; top: 103px; width: 192px; height: 26px; padding-left: 29px; }
.n4 { left: 208px; top: 142px; width: 185px; height: 30px; padding-left: 48px; }
.n5 { left: 213px; top: 184px; width: 193px; height: 32px; padding-left: 44px; }
.n6 { left: 218px; top: 229px; width: 189px; height: 33px; padding-left: 37px; }
.n7 { left: 214px; top: 275px; width: 188px; height: 28px; padding-left: 28px; }
.n8 { left: 212px; top: 316px; width: 187px; height: 31px; padding-left: 28px; }
.l1 { left: 285px; top: 47px; width: 8px; height: 10px; }
.l2 { left: 282px; top: 90px; width: 10px; height: 13px; }
.l3 { left: 283px; top: 129px; width: 8px; height: 13px; }
.l4 { left: 282px; top: 172px; width: 9px; height: 18px; border-width: 0 1px 1px; border-radius: 0 0 2px 2px; z-index: 1; }
.l5 { left: 286px; top: 216px; width: 8px; height: 13px; }
.l6 { left: 285px; top: 262px; width: 9px; height: 13px; }
.l7 { left: 285px; top: 303px; width: 10px; height: 13px; }

/* scrollbar + sidebar */
.vscroll { width: 12px; flex: none; background: #393939; }
.thumb { width: 6px; height: 128px; margin: 550px 0 0 3px; border-radius: 3px; background: #aeaeae; }
.side-split { width: 8px; flex: none; border-left: 2px solid #7c7c7c; border-right: 2px solid #7c7c7c; background: #383838; position: relative; }
.side-split::before { content: ""; position: absolute; left: -2px; right: -2px; top: 0; height: 2px; background: #7c7c7c; }
.side-handle { position: absolute; left: -2px; top: 408px; width: 8px; height: 74px; background: #a0a0a0; }
.side-handle::after { content: ""; position: absolute; left: 1px; top: 32px; border-top: 4px solid transparent; border-bottom: 4px solid transparent; border-left: 5px solid #444; }
.deck { width: 39px; flex: none; border-top: 2px solid #7c7c7c; display: flex; flex-direction: column; align-items: center; }
.dk { height: 35px; flex: none; display: flex; align-items: center; justify-content: center; }
.dk-sep { width: 22px; height: 1px; background: #2c2c2c; margin: 1px 0 2px; flex: none; }
.dk-on { width: 32px; height: 31px; margin-top: 2px; border: 1px solid #bdbdbd; border-radius: 4px; }

/* status */
.status { height: 21px; flex: none; display: flex; align-items: stretch; background: #3c3c3c; border-top: 1px solid #848484; font-size: 11.9px; color: #e4e4e4; }
.st { display: flex; align-items: center; flex: none; border-left: 1px solid #343434; white-space: nowrap; }
.st-page { width: 222px; padding-left: 10px; border-left: 0; }
.st-words { width: 357px; padding-left: 8px; }
.st-style { width: 237px; padding-left: 9px; }
.st-lang { width: 309px; padding-left: 84px; }
.st-ic { width: 29px; justify-content: center; }
.st-grow { width: 368px; }
.st-lay { width: 76px; padding-left: 12px; gap: 6px; }
.st-zoom { width: 143px; padding-left: 10px; }
.z-minus { width: 8px; height: 1px; background: #a8a8a8; }
.z-track { position: relative; width: 97px; height: 2px; margin: 0 5px 0 7px; background: #b0b0b0; }
.z-tick { position: absolute; left: 32px; top: -3px; width: 1px; height: 8px; background: #b0b0b0; }
.z-thumb { position: absolute; left: 42px; top: -4px; width: 9px; height: 10px; border-radius: 50%; background: #eee; }
.z-plus { width: 9px; height: 9px; background: linear-gradient(#a8a8a8,#a8a8a8) center/100% 1px no-repeat, linear-gradient(#a8a8a8,#a8a8a8) center/1px 100% no-repeat; }
.st-pct { width: 49px; padding-left: 8px; }
```
